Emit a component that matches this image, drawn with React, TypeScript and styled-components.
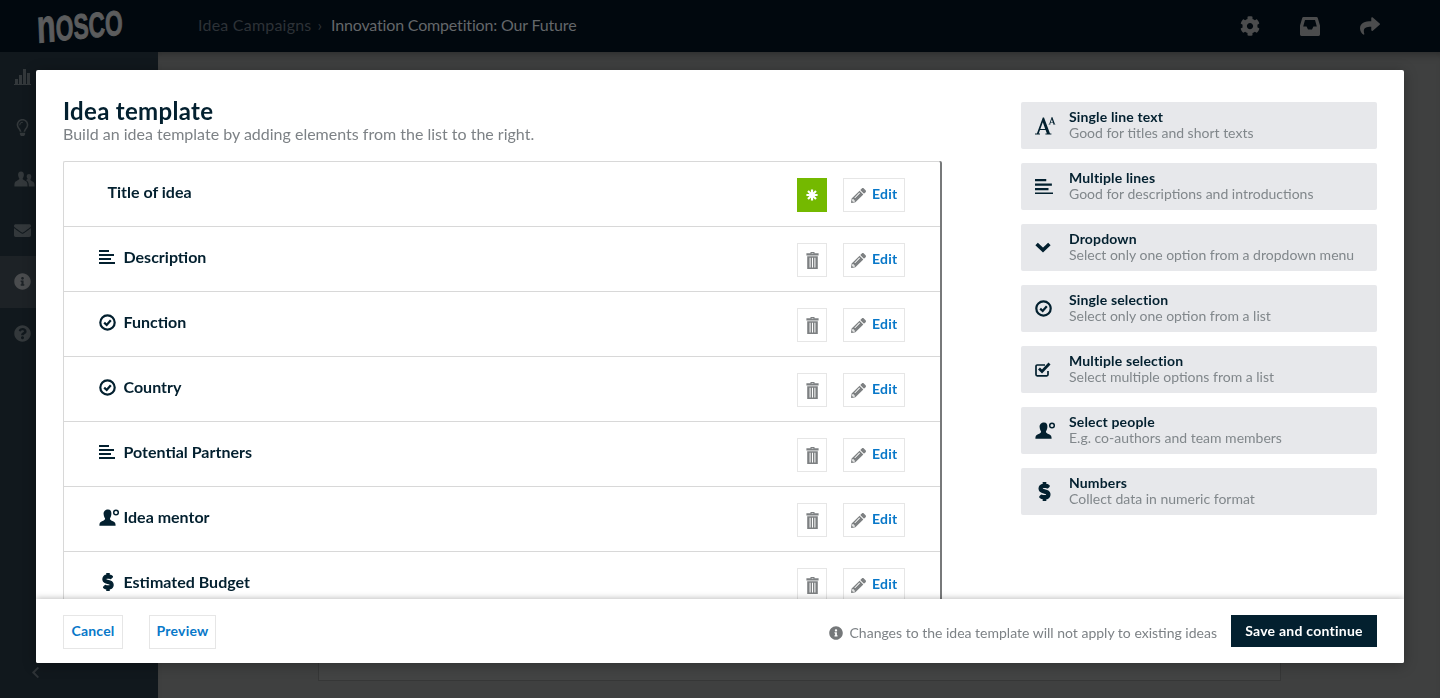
import React from 'react';
import styled, { createGlobalStyle } from 'styled-components';
import { FaCog, FaShare, FaPencilAlt, FaInfoCircle, FaQuestionCircle, FaEnvelope, FaRegLightbulb, FaDollarSign, FaChevronLeft } from 'react-icons/fa';

const GlobalStyle = createGlobalStyle`
  html, body {
    margin: 0;
    padding: 0;
    height: 100%;
    overflow: hidden;
    font-family: Lato, "Liberation Sans", sans-serif;
  }
  * {
    box-sizing: border-box;
  }
`;

const navy = '#03202f';
const blue = '#0878c9';

const Page = styled.div`
  width: 1440px;
  height: 698px;
  display: flex;
  flex-direction: column;
  background: #3f4040;
  overflow: hidden;
`;

const TopBar = styled.header`
  height: 52px;
  flex-shrink: 0;
  display: flex;
  align-items: center;
  background: #01080e;
  color: #4d4f51;
`;

const LogoBox = styled.div`
  width: 158px;
  flex-shrink: 0;
  padding: 0 0 0 28px;
  margin-top: 5px;
`;

const Logo = styled.span`
  display: inline-block;
  font-family: "Liberation Sans", sans-serif;
  font-size: 35px;
  line-height: 35px;
  font-weight: 700;
  white-space: nowrap;
  color: #5b5c5d;
  -webkit-text-stroke: 1px #5b5c5d;
  transform: translateX(9px) scaleX(0.65) rotate(-3.7deg);
  transform-origin: left center;
  &::first-letter {
    font-size: 47px;
  }
`;

const Crumbs = styled.div`
  margin: -4px 0 0 40px;
  flex: 1;
  font-size: 16px;
  color: #2d3237;
  display: flex;
  gap: 6px;
`;

const CrumbParent = styled.span`
  letter-spacing: 0.22px;
`;

const CrumbCurrent = styled.span`
  color: #64676a;
  margin-left: 3px;
  letter-spacing: -0.17px;
`;

const TopIcons = styled.div`
  display: flex;
  gap: 40px;
  padding-right: 60px;
  font-size: 20px;
  color: #4b4c4d;
  align-items: center;
`;

const Lower = styled.div`
  flex: 1;
  display: flex;
  min-height: 0;
`;

const Sidebar = styled.nav`
  width: 158px;
  flex-shrink: 0;
  background: #11181d;
  display: flex;
  flex-direction: column;
  position: relative;
  color: #33383b;
`;

const SideItem = styled.div<{ $active?: boolean; $first?: boolean }>`
  height: ${(p) => (p.$first ? '49.5px' : '51.5px')};
  width: 158px;
  display: flex;
  align-items: center;
  padding-left: 14px;
  font-size: 17px;
  background: ${(p) => (p.$active ? '#1d2226' : 'transparent')};
  color: ${(p) => (p.$active ? '#4a4c4e' : '#33383b')};
`;

const SideArrow = styled.div`
  position: absolute;
  left: 29px;
  bottom: 17px;
  color: #2e3337;
  font-size: 13px;
  line-height: 13px;
`;

const Main = styled.main`
  flex: 1;
  padding: 0 159px 17px 160px;
  display: flex;
  align-items: flex-end;
  box-shadow: inset 0 8px 8px -6px rgba(0, 0, 0, 0.35);
`;

const BackCard = styled.div`
  width: 100%;
  height: 40px;
  background: #434444;
  border: 1px solid #363737;
`;

const Modal = styled.section`
  position: fixed;
  left: 36px;
  top: 70px;
  width: 1368px;
  height: 593px;
  background: #fff;
  border-radius: 2px;
  box-shadow: 0 2px 14px rgba(0, 0, 0, 0.3);
  display: flex;
  flex-direction: column;
  overflow: hidden;
`;

const ModalBody = styled.div`
  flex: 1;
  min-height: 0;
  display: flex;
  justify-content: space-between;
  padding: 32px 27px 0;
  overflow: hidden;
`;

const LeftColumn = styled.div`
  width: 879px;
  margin-top: -1px;
`;

const Title = styled.h1`
  margin: 0;
  font-size: 24px;
  line-height: 20px;
  font-weight: 700;
  letter-spacing: 0.32px;
  color: ${navy};
`;

const Subtitle = styled.p`
  margin: 3px 0 17px;
  font-size: 16px;
  line-height: 20px;
  color: #7d8286;
`;

const FieldList = styled.div`
  width: 877px;
  border: 1px solid #d8d8d8;
  border-bottom: 0;
  border-right: 0;
  border-radius: 2px 2px 0 0;
  box-shadow: 2px 0 0 0 #77797a;
`;

const FieldRow = styled.div`
  height: 65px;
  display: flex;
  align-items: center;
  border-bottom: 1px solid #d8d8d8;
  padding: 2px 35px 0 35px;
`;

const FieldIcon = styled.span`
  width: 24.5px;
  height: 18px;
  flex-shrink: 0;
  display: flex;
  align-items: center;
  color: ${navy};
  margin-top: -6px;
`;

const FieldLabel = styled.span<{ $plain?: boolean }>`
  flex: 1;
  font-size: 16px;
  font-weight: 700;
  color: ${navy};
  margin-top: -7px;
  padding-left: ${(p) => (p.$plain ? '8.5px' : '0')};
`;

const IconButton = styled.button<{ $required?: boolean }>`
  width: 30px;
  height: 34px;
  padding: 0;
  margin-right: 16px;
  display: flex;
  align-items: center;
  justify-content: center;
  border: 1px solid ${(p) => (p.$required ? '#74b900' : '#e6e6e6')};
  background: ${(p) => (p.$required ? '#74b900' : '#fff')};
  color: ${(p) => (p.$required ? '#fff' : '#7d8082')};
`;

const EditButton = styled.button`
  width: 62px;
  height: 34px;
  padding: 0 0 0 7px;
  display: flex;
  align-items: center;
  gap: 6px;
  border: 1px solid #e6e6e6;
  background: #fff;
  svg {
    color: #7d8082;
    font-size: 15px;
  }
`;

const EditLabel = styled.span`
  color: ${blue};
  font-family: Lato, "Liberation Sans", sans-serif;
  font-size: 14px;
  font-weight: 700;
  letter-spacing: 0.2px;
  margin-top: -3px;
`;

const Palette = styled.aside`
  width: 356px;
  display: flex;
  flex-direction: column;
  gap: 14px;
`;

const PaletteItem = styled.div`
  height: 47px;
  display: flex;
  align-items: center;
  background: #e7e8eb;
  border-radius: 2px;
  padding-left: 14px;
`;

const PaletteIcon = styled.span`
  width: 34px;
  flex-shrink: 0;
  display: flex;
  align-items: center;
  color: ${navy};
`;

const PaletteText = styled.div`
  display: flex;
  flex-direction: column;
  padding-bottom: 2px;
`;

const PaletteName = styled.span`
  font-size: 14px;
  line-height: 16px;
  font-weight: 700;
  letter-spacing: 0.15px;
  color: ${navy};
`;

const PaletteHint = styled.span`
  font-size: 14px;
  line-height: 16px;
  color: #81878b;
`;

const Footer = styled.footer`
  height: 64px;
  flex-shrink: 0;
  display: flex;
  align-items: center;
  padding: 0 27px;
  background: #fff;
  position: relative;
  box-shadow: 0 -1px 6px rgba(0, 0, 0, 0.25);
`;

const GhostButton = styled.button<{ $width: number }>`
  width: ${(p) => p.$width}px;
  height: 34px;
  padding: 0 0 3px;
  margin: 1px 26px 0 0;
  border: 1px solid #e6e6e6;
  background: #fff;
  color: ${blue};
  font-family: inherit;
  font-size: 14px;
  font-weight: 700;
  letter-spacing: 0.2px;
`;

const Notice = styled.div`
  margin-left: auto;
  display: flex;
  align-items: center;
  gap: 7px;
  font-size: 14px;
  color: #7d8286;
  padding-top: 3px;
  svg {
    color: #75787a;
    font-size: 14px;
  }
`;

const SaveButton = styled.button`
  width: 146px;
  height: 32px;
  margin-left: 14px;
  border: 0;
  padding: 0 0 2px;
  background: ${navy};
  color: #fff;
  font-family: inherit;
  font-size: 14px;
  font-weight: 700;
  letter-spacing: 0.25px;
`;

const LinesIcon = ({ size = 16 }: { size?: number }) => (
  <svg width={size} height={(size * 14) / 16} viewBox="0 0 16 14" fill="currentColor">
    <rect x="0" y="0" width="10" height="2" />
    <rect x="0" y="4" width="15" height="2" />
    <rect x="0" y="8" width="12" height="2" />
    <rect x="0" y="12" width="16" height="2" />
  </svg>
);

const CheckCircleIcon = () => (
  <svg width="17" height="17" viewBox="0 0 17 17" fill="none" stroke="currentColor">
    <circle cx="8.5" cy="8.5" r="7.2" strokeWidth="2.2" />
    <path d="M5.2 8.6 L7.7 11 L11.8 6.2" strokeWidth="2.2" />
  </svg>
);

const CheckBoxIcon = () => (
  <svg width="16" height="15" viewBox="0 0 16 15" fill="none" stroke="currentColor">
    <path d="M13 9 V12.6 a1.2 1.2 0 0 1 -1.2 1.2 H2.2 a1.2 1.2 0 0 1 -1.2 -1.2 V4.2 a1.2 1.2 0 0 1 1.2 -1.2 H10" strokeWidth="1.7" />
    <path d="M4 6.5 L7 9.5 L14.5 1.5" strokeWidth="2.8" />
  </svg>
);

const PersonIcon = () => (
  <svg width="21" height="17" viewBox="0 0 21 17" fill="currentColor">
    <path d="M9 0.5 C11.6 0.5 12.6 2.6 12.4 5 C12.2 7 11.5 8.6 10.9 9.4 C11 10.8 12 11.4 14 12.2 C16 13 16.6 13.8 16.6 16.8 H0.4 C0.4 13.8 1 13 3 12.2 C5 11.4 6 10.8 6.1 9.4 C5.5 8.6 4.8 7 4.6 5 C4.4 2.6 6.4 0.5 9 0.5 Z" />
    <circle cx="17" cy="3.5" r="2.3" fill="none" stroke="currentColor" strokeWidth="1.5" />
  </svg>
);

const SerifAIcon = () => (
  <svg width="21" height="19" viewBox="0 0 21 19" fill="currentColor">
    <path d="M0 18.4 H5 V17.6 H3.7 L5 14 H10.6 L11.9 17.6 H10.4 V18.4 H16.4 V17.6 H15 L9 1.4 H7.8 L1.9 17.6 H0 Z M5.4 13 L7.8 6.2 L10.2 13 Z" />
    <path d="M13.3 8.6 H15.6 V8.2 H15.1 L15.6 6.8 H18 L18.5 8.2 H17.9 V8.6 H20.6 V8.2 H20 L17.3 1 H16.7 L14.2 8.2 H13.3 Z M15.8 6.3 L16.8 3.3 L17.8 6.3 Z" />
  </svg>
);

const ChevronIcon = () => (
  <svg width="16" height="11" viewBox="0 0 16 11" fill="none" stroke="currentColor">
    <path d="M1.6 2 L8 8 L14.4 2" strokeWidth="3.6" />
  </svg>
);

const TrashIcon = () => (
  <svg width="13" height="17" viewBox="0 0 13 17" fill="currentColor">
    <path d="M4.5 0 H8.5 V1.2 H12.6 V3.4 H0.4 V1.2 H4.5 Z M5.6 0.9 V1.6 H7.4 V0.9 Z" fillRule="evenodd" />
    <path d="M1.2 4.2 H11.8 V17 H1.2 Z M3.6 5.8 V15.4 H4.6 V5.8 Z M6 5.8 V15.4 H7 V5.8 Z M8.4 5.8 V15.4 H9.4 V5.8 Z" fillRule="evenodd" />
  </svg>
);

const StarIcon = () => (
  <svg width="12" height="12" viewBox="0 0 12 12" fill="none" stroke="currentColor" strokeWidth="2.2">
    <path d="M6 0.4 V11.6 M0.4 6 H11.6 M2 2 L10 10 M10 2 L2 10" />
    <circle cx="6" cy="6" r="2.4" fill="currentColor" stroke="none" />
  </svg>
);

const InboxIcon = () => (
  <svg width="20" height="19" viewBox="0 0 20 19" fill="currentColor">
    <path
      fillRule="evenodd"
      d="M3.4 0 H16.6 Q17.4 0 17.7 0.8 L20 8.5 V17.6 Q20 19 18.6 19 H1.4 Q0 19 0 17.6 V8.5 L2.3 0.8 Q2.6 0 3.4 0 Z M5 3 L3.2 9.5 H6.6 L8 12.5 H12 L13.4 9.5 H16.8 L15 3 Z"
    />
  </svg>
);

const BarsIcon = () => (
  <svg width="17" height="16" viewBox="0 0 17 16" fill="currentColor">
    <rect x="1" y="10" width="3" height="5" />
    <rect x="5" y="6" width="3" height="9" />
    <rect x="9" y="0" width="3" height="15" />
    <rect x="13" y="4" width="3" height="11" />
    <rect x="0" y="15" width="17" height="1" />
  </svg>
);

const PeopleIcon = () => (
  <svg width="21" height="16" viewBox="0 0 21 16" fill="currentColor">
    <path d="M7 0.5 C9.2 0.5 10 2.2 9.9 4 C9.8 5.6 9.2 6.8 8.6 7.6 C8.7 8.8 10 9.2 11.4 9.9 C13 10.6 13.6 11.4 13.6 15.5 H0.4 C0.4 11.4 1 10.6 2.6 9.9 C4 9.2 5.3 8.8 5.4 7.6 C4.8 6.8 4.2 5.6 4.1 4 C4 2.2 4.8 0.5 7 0.5 Z" />
    <path d="M15 3 C16.8 3 17.4 4.4 17.3 5.8 C17.2 7 16.8 7.9 16.4 8.5 C16.5 9.5 17.4 9.8 18.6 10.4 C20 11 20.6 11.8 20.6 15.5 H14.8 C14.8 11.6 14 10.2 11.9 9 C13 8.6 13.6 8.2 13.6 7.8 C13 7.2 12.8 6.6 12.7 5.8 C12.6 4.4 13.2 3 15 3 Z" />
  </svg>
);

const BoldDollar = ({ size }: { size: number }) => (
  <FaDollarSign size={size} stroke="currentColor" strokeWidth={36} />
);

const fields = [
  { icon: <LinesIcon />, label: 'Description' },
  { icon: <CheckCircleIcon />, label: 'Function' },
  { icon: <CheckCircleIcon />, label: 'Country' },
  { icon: <LinesIcon />, label: 'Potential Partners' },
  { icon: <PersonIcon />, label: 'Idea mentor' },
  { icon: <BoldDollar size={18} />, label: 'Estimated Budget' },
];

const palette = [
  { icon: <SerifAIcon />, name: 'Single line text', hint: 'Good for titles and short texts' },
  { icon: <LinesIcon size={18} />, name: 'Multiple lines', hint: 'Good for descriptions and introductions' },
  { icon: <ChevronIcon />, name: 'Dropdown', hint: 'Select only one option from a dropdown menu' },
  { icon: <CheckCircleIcon />, name: 'Single selection', hint: 'Select only one option from a list' },
  { icon: <CheckBoxIcon />, name: 'Multiple selection', hint: 'Select multiple options from a list' },
  { icon: <PersonIcon />, name: 'Select people', hint: 'E.g. co-authors and team members' },
  { icon: <BoldDollar size={19} />, name: 'Numbers', hint: 'Collect data in numeric format' },
];

export default function App() {
  return (
    <Page>
      <GlobalStyle />
      <TopBar>
        <LogoBox><Logo>nOSCO</Logo></LogoBox>
        <Crumbs>
          <CrumbParent>Idea Campaigns</CrumbParent>
          <span>›</span>
          <CrumbCurrent>Innovation Competition: Our Future</CrumbCurrent>
        </Crumbs>
        <TopIcons>
          <FaCog />
          <InboxIcon />
          <FaShare />
        </TopIcons>
      </TopBar>
      <Lower>
        <Sidebar>
          <SideItem $first><BarsIcon /></SideItem>
          <SideItem><FaRegLightbulb /></SideItem>
          <SideItem><PeopleIcon /></SideItem>
          <SideItem><FaEnvelope /></SideItem>
          <SideItem $active><FaInfoCircle /></SideItem>
          <SideItem><FaQuestionCircle /></SideItem>
          <SideArrow><FaChevronLeft /></SideArrow>
        </Sidebar>
        <Main><BackCard /></Main>
      </Lower>
      <Modal>
        <ModalBody>
          <LeftColumn>
            <Title>Idea template</Title>
            <Subtitle>Build an idea template by adding elements from the list to the right.</Subtitle>
            <FieldList>
              <FieldRow>
                <FieldLabel $plain>Title of idea</FieldLabel>
                <IconButton $required><StarIcon /></IconButton>
                <EditButton><FaPencilAlt /><EditLabel>Edit</EditLabel></EditButton>
              </FieldRow>
              {fields.map((field) => (
                <FieldRow key={field.label}>
                  <FieldIcon>{field.icon}</FieldIcon>
                  <FieldLabel>{field.label}</FieldLabel>
                  <IconButton><TrashIcon /></IconButton>
                  <EditButton><FaPencilAlt /><EditLabel>Edit</EditLabel></EditButton>
                </FieldRow>
              ))}
            </FieldList>
          </LeftColumn>
          <Palette>
            {palette.map((item) => (
              <PaletteItem key={item.name}>
                <PaletteIcon>{item.icon}</PaletteIcon>
                <PaletteText>
                  <PaletteName>{item.name}</PaletteName>
                  <PaletteHint>{item.hint}</PaletteHint>
                </PaletteText>
              </PaletteItem>
            ))}
          </Palette>
        </ModalBody>
        <Footer>
          <GhostButton $width={60}>Cancel</GhostButton>
          <GhostButton $width={67}>Preview</GhostButton>
          <Notice><FaInfoCircle />Changes to the idea template will not apply to existing ideas</Notice>
          <SaveButton>Save and continue</SaveButton>
        </Footer>
      </Modal>
    </Page>
  );
}
